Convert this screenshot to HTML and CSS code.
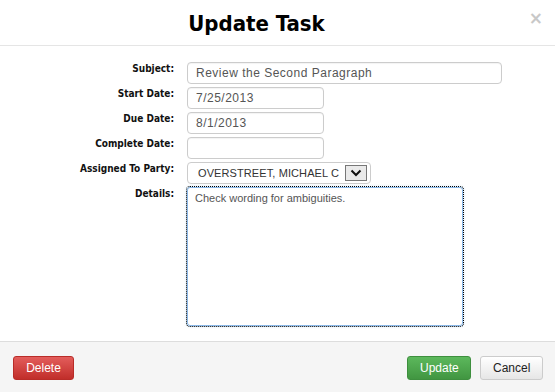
FILE: index.html
```html
<!DOCTYPE html>
<html>
<head>
<meta charset="utf-8">
<link rel="stylesheet" href="styles.css">
</head>
<body>
<div class="modal">
  <div class="modal-header">
    <h1 class="title">Update Task</h1>
    <span class="close">&times;</span>
  </div>
  <div class="modal-body">
    <div class="form">
      <label class="lbl">Subject:</label>
      <div class="field"><input class="input w-subject" type="text" value="Review the Second Paragraph"></div>
      <label class="lbl">Start Date:</label>
      <div class="field"><input class="input w-date" type="text" value="7/25/2013"></div>
      <label class="lbl">Due Date:</label>
      <div class="field"><input class="input w-date" type="text" value="8/1/2013"></div>
      <label class="lbl">Complete Date:</label>
      <div class="field"><input class="input w-date" type="text" value=""></div>
      <label class="lbl">Assigned To Party:</label>
      <div class="field">
        <div class="select">
          <span class="select-text">OVERSTREET, MICHAEL C</span>
          <span class="select-btn"><svg width="12" height="8" viewBox="0 0 12 8"><path d="M1.5 1.5 L6 6 L10.5 1.5" fill="none" stroke="#111" stroke-width="2"/></svg></span>
        </div>
      </div>
      <label class="lbl">Details:</label>
      <div class="field"><textarea class="textarea">Check wording for ambiguities.</textarea></div>
    </div>
  </div>
  <div class="modal-footer">
    <button class="btn btn-danger">Delete</button>
    <div class="spacer"></div>
    <button class="btn btn-success">Update</button>
    <button class="btn btn-default">Cancel</button>
  </div>
</div>
</body>
</html>
```
FILE: styles.css
```css
html, body {
  margin: 0;
  padding: 0;
  background: #fff;
}
.modal {
  width: 555px;
  height: 392px;
  display: flex;
  flex-direction: column;
  font-family: "Liberation Sans", Arial, sans-serif;
}
.modal-header {
  height: 45px;
  border-bottom: 1px solid #e5e5e5;
  display: flex;
  align-items: center;
  justify-content: center;
  padding-right: 42px;
  position: relative;
}
.title {
  margin: 0;
  font-family: "DejaVu Sans Condensed", "DejaVu Sans", sans-serif;
  font-weight: bold;
  font-size: 22px;
  color: #000;
  padding-top: 2px;
}
.close {
  position: absolute;
  right: 12px;
  top: 8px;
  font-family: "DejaVu Sans", sans-serif;
  font-weight: bold;
  font-size: 17px;
  color: #c8c8c8;
}
.modal-body {
  flex: 1;
  padding-top: 16px;
}
.form {
  display: grid;
  grid-template-columns: 174px 1fr;
  column-gap: 13px;
  row-gap: 3px;
}
.lbl {
  text-align: right;
  font-family: "DejaVu Sans Condensed", "DejaVu Sans", sans-serif;
  font-weight: bold;
  font-size: 10px;
  color: #111;
  padding-top: 1px;
}
.field {
  display: flex;
}
.input {
  box-sizing: border-box;
  height: 22px;
  border: 1px solid #ccc;
  border-radius: 4px;
  padding: 0 7px 0 8px;
  font-family: "Liberation Sans", Arial, sans-serif;
  font-size: 12px;
  letter-spacing: 0.5px;
  color: #555;
  box-shadow: inset 0 1px 1px rgba(0,0,0,0.05);
  margin: 0;
}
.w-subject { width: 315px; }
.w-date { width: 137px; }
.select {
  box-sizing: border-box;
  width: 184px;
  height: 22px;
  border: 1px solid #ccc;
  border-radius: 4px;
  display: flex;
  align-items: center;
  padding: 0 3px 0 10px;
  font-size: 11px;
  letter-spacing: 0.1px;
  color: #333;
  white-space: nowrap;
}
.select-text { flex: 1; }
.select-btn {
  box-sizing: border-box;
  width: 22px;
  height: 16px;
  border: 1px solid #777;
  background: #eaeaea;
  display: flex;
  align-items: center;
  justify-content: center;
}
.textarea {
  box-sizing: border-box;
  width: 276px;
  height: 139px;
  margin: 0;
  border: 1px solid #8ab8e8;
  border-radius: 3px;
  outline: 1px dotted #000;
  outline-offset: 0;
  resize: none;
  padding: 4px 7px;
  font-family: "Liberation Sans", Arial, sans-serif;
  font-size: 11px;
  color: #555;
  box-shadow: 0 0 3px rgba(102,175,233,0.5);
}
.modal-footer {
  height: 51px;
  border-top: 1px solid #ddd;
  background: #f5f5f5;
  display: flex;
  align-items: flex-start;
  padding: 14px 12px 0 13px;
  gap: 9px;
  box-sizing: border-box;
}
.spacer { flex: 1; }
.btn {
  height: 24px;
  box-sizing: border-box;
  border-radius: 3px;
  font-family: "Liberation Sans", Arial, sans-serif;
  font-size: 12px;
  padding: 0 12px;
  margin: 0;
  cursor: pointer;
}
.btn-danger {
  width: 61px;
  color: #fff;
  background: linear-gradient(#e35d5b, #c12e2a);
  border: 1px solid #b92c28;
}
.btn-success {
  width: 64px;
  color: #fff;
  background: linear-gradient(#5cb85c, #419641);
  border: 1px solid #3e8f3e;
}
.btn-default {
  width: 63px;
  color: #222;
  background: linear-gradient(#fff, #e6e6e6);
  border: 1px solid #ccc;
}
```
